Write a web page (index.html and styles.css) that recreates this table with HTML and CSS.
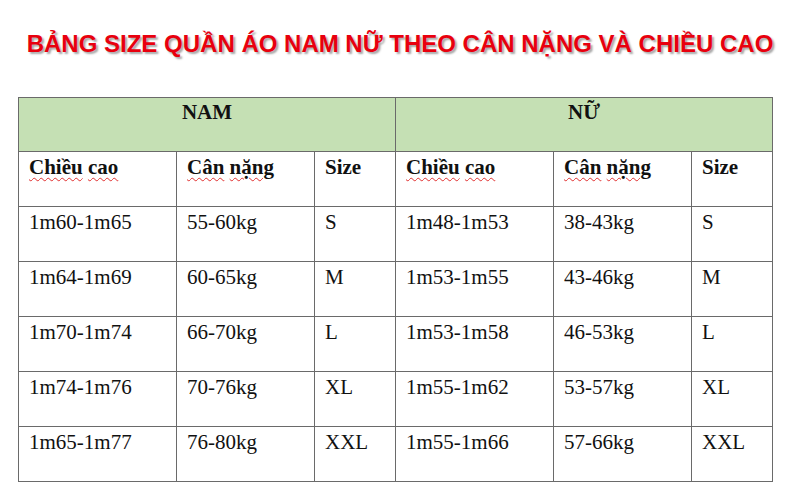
FILE: index.html
```html
<!DOCTYPE html>
<html lang="vi">
<head>
<meta charset="utf-8">
<link rel="stylesheet" href="styles.css">
</head>
<body>
<div class="page">
  <h1 class="title">BẢNG SIZE QUẦN ÁO NAM NỮ THEO CÂN NẶNG VÀ CHIỀU CAO</h1>
  <table class="size-table">
    <colgroup>
      <col class="c1"><col class="c2"><col class="c3">
      <col class="c1"><col class="c2"><col class="c3">
    </colgroup>
    <tr class="group-row">
      <th colspan="3">NAM</th>
      <th colspan="3">NỮ</th>
    </tr>
    <tr class="head-row">
      <th><span class="spell">Chiều</span> <span class="spell">cao</span></th>
      <th><span class="spell">Cân</span> <span class="spell">nặng</span></th>
      <th>Size</th>
      <th><span class="spell">Chiều</span> <span class="spell">cao</span></th>
      <th><span class="spell">Cân</span> <span class="spell">nặng</span></th>
      <th>Size</th>
    </tr>
    <tr><td>1m60-1m65</td><td>55-60kg</td><td>S</td><td>1m48-1m53</td><td>38-43kg</td><td>S</td></tr>
    <tr><td>1m64-1m69</td><td>60-65kg</td><td>M</td><td>1m53-1m55</td><td>43-46kg</td><td>M</td></tr>
    <tr><td>1m70-1m74</td><td>66-70kg</td><td>L</td><td>1m53-1m58</td><td>46-53kg</td><td>L</td></tr>
    <tr><td>1m74-1m76</td><td>70-76kg</td><td>XL</td><td>1m55-1m62</td><td>53-57kg</td><td>XL</td></tr>
    <tr><td>1m65-1m77</td><td>76-80kg</td><td>XXL</td><td>1m55-1m66</td><td>57-66kg</td><td>XXL</td></tr>
  </table>
</div>
</body>
</html>
```
FILE: styles.css
```css
html, body {
  margin: 0;
  padding: 0;
  background: #ffffff;
}
.page {
  width: 800px;
  height: 500px;
  display: flex;
  flex-direction: column;
  align-items: flex-start;
}
.title {
  margin: 0;
  padding-top: 30px;
  width: 800px;
  text-align: center;
  font-family: "Liberation Sans", Arial, sans-serif;
  font-weight: bold;
  font-size: 24px;
  line-height: 28px;
  color: #e8000e;
  text-shadow: 2px 2px 2px rgba(0, 0, 0, 0.35);
}
.size-table {
  margin-top: 39px;
  margin-left: 18px;
  border-collapse: collapse;
  table-layout: fixed;
  width: 755px;
  font-family: "Liberation Serif", "Times New Roman", serif;
  font-size: 21px;
  color: #111;
}
.c1 { width: 158px; }
.c2 { width: 138px; }
.c3 { width: 81px; }
.size-table th,
.size-table td {
  border: 1px solid #6a6a6a;
  height: 55px;
  padding: 3px 10px 0;
  vertical-align: top;
  text-align: left;
  box-sizing: border-box;
  line-height: 24px;
}
.group-row th {
  height: 54px;
  background: #c5e0b4;
  text-align: center;
  font-weight: bold;
  padding-top: 2px;
}
.head-row th {
  font-weight: bold;
}
.spell {
  text-decoration: underline wavy #e03030;
  text-decoration-thickness: 1px;
  text-underline-offset: 3px;
}
```
